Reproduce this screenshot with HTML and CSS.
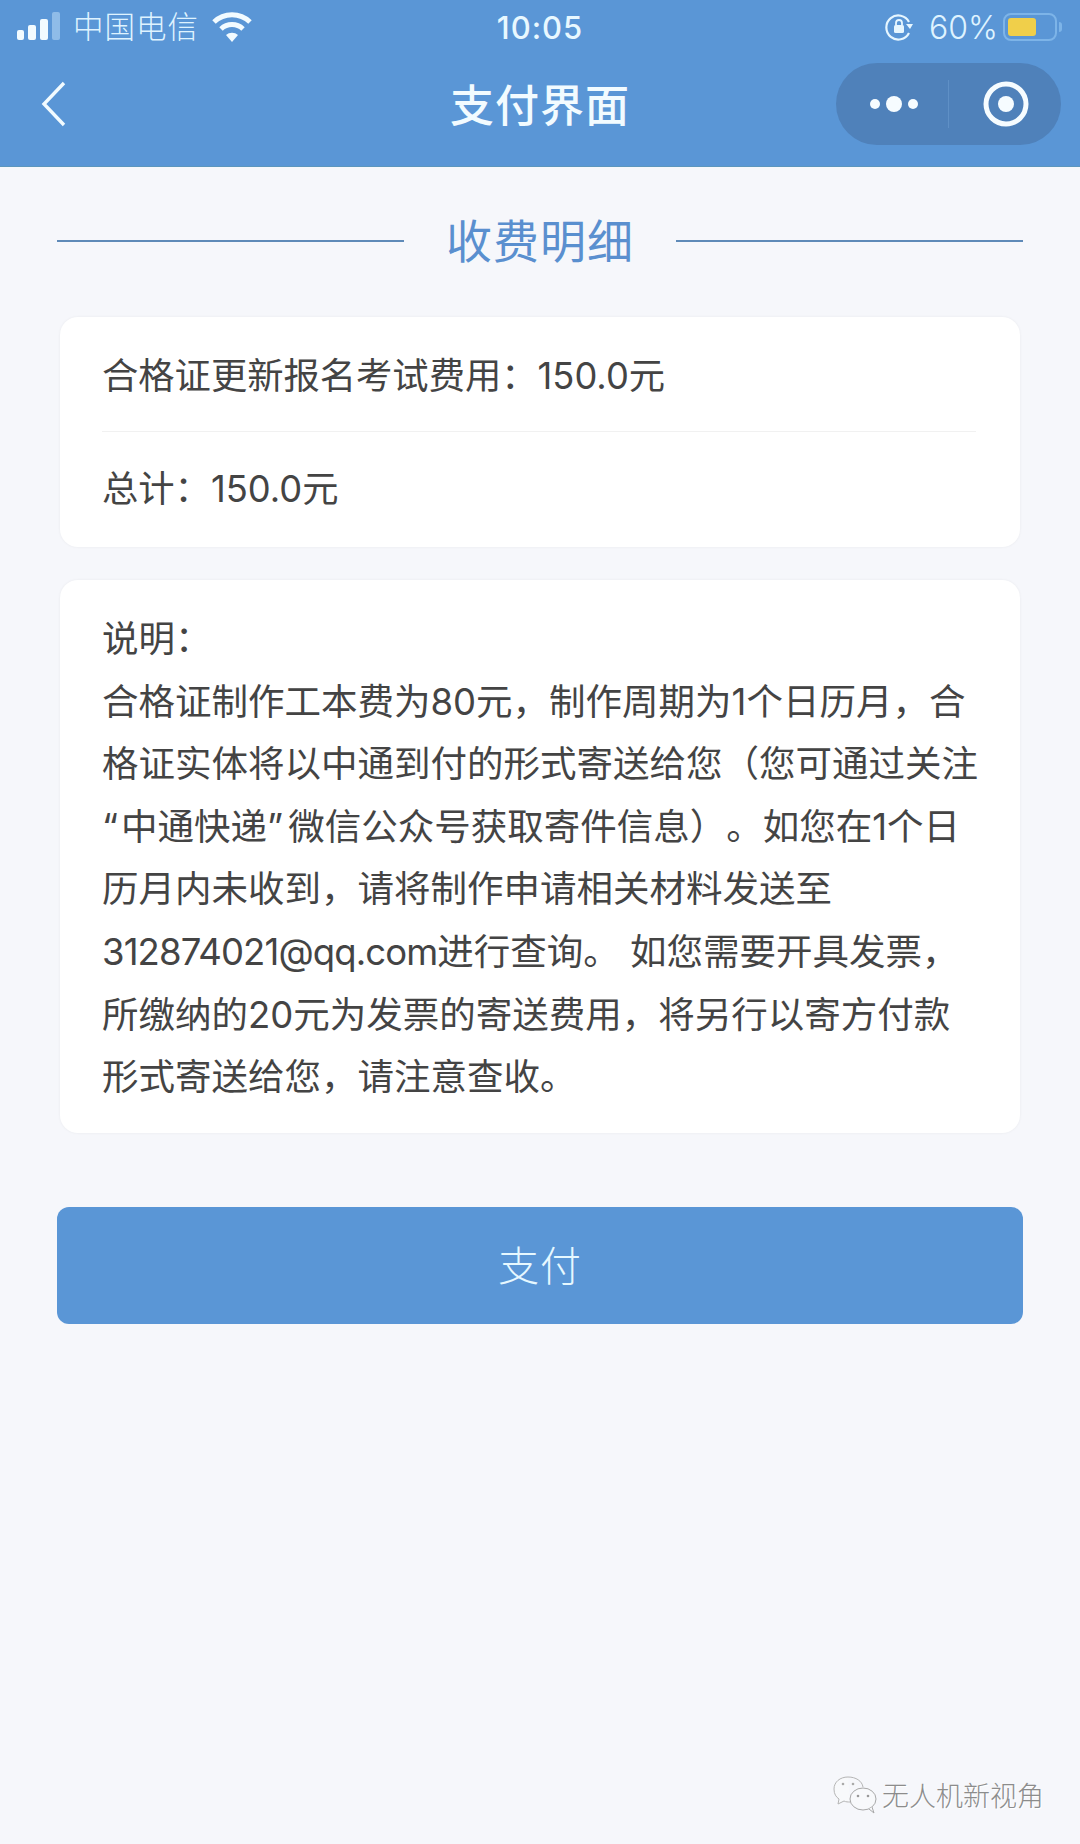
FILE: index.html
```html
<!DOCTYPE html>
<html lang="zh-CN">
<head>
<meta charset="UTF-8" />
<meta name="viewport" content="width=device-width, initial-scale=1" />
<title>支付界面</title>
<link rel="stylesheet" href="styles.css">
</head>
<body>
<div class="page">
  <header class="top">
    <div class="status">
      <div class="status-left">
        <svg class="signal" width="46" height="28" viewBox="0 0 46 28">
          <rect x="0" y="18" width="7" height="10" rx="2" fill="#f2fbff"/>
          <rect x="11" y="13" width="8" height="15" rx="2" fill="#f2fbff"/>
          <rect x="23" y="7" width="8" height="21" rx="2" fill="#f2fbff"/>
          <rect x="35" y="0" width="8" height="28" rx="2" fill="#8fbce8"/>
        </svg>
        <span class="carrier">中国电信</span>
        <svg class="wifi" width="40" height="30" viewBox="0 0 40 30">
          <path d="M2 10 A26 26 0 0 1 38 10" fill="none" stroke="#f2fbff" stroke-width="5"/>
          <path d="M9 17 A16 16 0 0 1 31 17" fill="none" stroke="#f2fbff" stroke-width="5"/>
          <path d="M14 23 A9 9 0 0 1 26 23 L20 30 Z" fill="#f2fbff"/>
        </svg>
      </div>
      <div class="clock">10:05</div>
      <div class="status-right">
        <svg class="lock" width="28" height="28" viewBox="0 0 28 28">
          <path d="M24 9 A12 12 0 1 0 24 20" fill="none" stroke="#e6f6ff" stroke-width="2.2"/>
          <path d="M21 11 L28 11 L25 16 Z" fill="#e6f6ff"/>
          <rect x="9" y="12" width="10" height="8" rx="1.5" fill="#e6f6ff"/>
          <path d="M11 12 V10 A3 3 0 0 1 17 10 V12" fill="none" stroke="#e6f6ff" stroke-width="1.8"/>
        </svg>
        <span class="percent">60%</span>
        <div class="battery"><div class="battery-fill"></div></div>
        <div class="battery-nub"></div>
      </div>
    </div>
    <div class="nav">
      <svg class="back" width="26" height="46" viewBox="0 0 26 46">
        <path d="M23 2 L3 23 L23 44" fill="none" stroke="#f2fbff" stroke-width="3.4"/>
      </svg>
      <h1 class="nav-title">支付界面</h1>
      <div class="capsule">
        <svg class="dots" width="50" height="20" viewBox="0 0 50 20">
          <circle cx="6" cy="10" r="5" fill="#f6fcff"/>
          <circle cx="25" cy="10" r="8" fill="#f6fcff"/>
          <circle cx="44" cy="10" r="5" fill="#f6fcff"/>
        </svg>
        <div class="capsule-line"></div>
        <svg class="target" width="46" height="46" viewBox="0 0 46 46">
          <circle cx="23" cy="23" r="20" fill="none" stroke="#f6fcff" stroke-width="5"/>
          <circle cx="23" cy="23" r="8" fill="#f6fcff"/>
        </svg>
      </div>
    </div>
  </header>

  <main class="content">
    <div class="heading">
      <span class="heading-line"></span>
      <h2>收费明细</h2>
      <span class="heading-line"></span>
    </div>

    <section class="card fee">
      <div class="fee-row fee-first">合格证更新报名考试费用：150.0元</div>
      <div class="fee-row">总计：150.0元</div>
    </section>

    <section class="card note">
      说明：<br>
      合格证制作工本费为80元，制作周期为1个日历月，合<br>
      格证实体将以中通到付的形式寄送给您（您可通过关注<br>
      <span class="quote-open">“</span>中通快递<span class="quote-close">”</span>微信公众号获取寄件信息）。如您在1个日<br>
      历月内未收到，请将制作申请相关材料发送至<br>
      <span class="mail">312874021@qq.com</span>进行查询。 如您需要开具发票，<br>
      所缴纳的20元为发票的寄送费用，将另行以寄方付款<br>
      形式寄送给您，请注意查收。
    </section>

    <button class="pay" type="button">支付</button>
  </main>

  <div class="mark">
    <svg width="44" height="38" viewBox="0 0 44 38">
      <path d="M15 1 C7 1 1 6 1 13 C1 18 3 21 6 23 L5 28 L11 25 C13 26 15 26 17 26" fill="#f8f9fb" stroke="#b5b5b5" stroke-width="1"/>
      <path d="M15 1 C23 1 29 5 30 11" fill="none" stroke="#b5b5b5" stroke-width="1"/>
      <ellipse cx="30" cy="23" rx="13" ry="11" fill="#f8f9fb" stroke="#a8a8a8" stroke-width="1"/>
      <path d="M36 33 L41 37 L39 31" fill="#f8f9fb" stroke="#a8a8a8" stroke-width="1"/>
      <circle cx="10" cy="8" r="1.3" fill="#aaa"/>
      <circle cx="20" cy="8" r="1.3" fill="#aaa"/>
      <circle cx="25" cy="20" r="1.3" fill="#999"/>
      <circle cx="35" cy="20" r="1.3" fill="#999"/>
    </svg>
    <span class="mark-text">无人机新视角</span>
  </div>
</div>
</body>
</html>
```

FILE: styles.css
```css
html, body { margin:0; padding:0; }
body { background:#f6f7fb; font-family:Inter, "Noto Sans CJK SC", sans-serif; text-spacing-trim:space-all; }
.page { position:relative; width:1080px; height:1844px; overflow:hidden; }

.top { height:166px; background:#5a96d6; border-bottom:1px solid #5c96bd; color:#f2fbff; }
.status { height:54px; display:grid; grid-template-columns:1fr auto 1fr; align-items:center; }
.status-left { display:flex; align-items:center; padding-left:17px; }
.signal { margin-top:-2px; }
.carrier { margin:-4px 0 0 10px; font-size:30.5px; font-weight:300; letter-spacing:1px; color:#dff3ff; }
.wifi { margin-left:13px; margin-top:0; }
.clock { font-size:31px; font-weight:500; letter-spacing:1px; color:#e8f8ff; }
.status-right { display:flex; align-items:center; justify-content:flex-end; padding-right:18px; }
.lock { margin-right:16px; }
.percent { font-size:32px; font-weight:300; color:#dff3ff; }
.battery { width:54px; height:28px; margin-left:5px; padding:3px; box-sizing:border-box; border:2px solid #7db4e8; border-radius:8px; }
.battery-fill { width:28px; height:100%; background:#f0cf4a; border-radius:3px; }
.battery-nub { width:3px; height:10px; margin-left:2px; background:#7db4e8; border-radius:0 3px 3px 0; }

.nav { height:112px; display:grid; grid-template-columns:1fr auto 1fr; align-items:center; }
.back { margin-left:41px; margin-top:-12px; }
.nav-title { margin:0; font-size:44px; font-weight:500; line-height:100px; letter-spacing:1px; color:#f2fbff; transform:translateY(-4px); }
.capsule { justify-self:end; width:225px; height:82px; margin:-13px 19px 0 0; display:flex; align-items:center; background:#4f81ba; border-radius:41px; }
.dots { margin-left:33px; }
.capsule-line { width:1px; height:48px; margin-left:29px; background:#5f90c6; }
.target { margin-left:34px; }

.content { padding:0 57px; }
.heading { height:150px; padding-bottom:2px; box-sizing:border-box; display:flex; align-items:center; justify-content:space-between; }
.heading-line { width:347px; height:2px; background:#5f8ab8; }
.heading h2 { margin:0 0 7px; font-size:46px; font-weight:400; letter-spacing:1px; color:#5a8fcf; }

.card { margin:0 3px; background:#fff; border-radius:18px; box-shadow:0 0 3px rgba(0,0,0,0.06); font-weight:400; color:#444; }
.fee { height:230px; padding:0 44px 0 42px; box-sizing:border-box; font-size:36.3px; }
.fee-row { height:115px; line-height:115px; white-space:nowrap; }
.fee-first { line-height:118px; border-bottom:1px solid #f1f1f1; box-sizing:border-box; }
.note { margin-top:33px; height:553px; padding:28px 40px 0 42px; box-sizing:border-box; font-size:36.5px; line-height:62.6px; white-space:nowrap; }
.quote-open { letter-spacing:3px; }
.quote-close { letter-spacing:5px; }
.mail { letter-spacing:-0.9px; }

.pay { display:block; width:100%; height:117px; margin-top:74px; padding:0 0 6px; border:none; border-radius:12px; background:#5a96d6; font-family:inherit; font-size:41px; font-weight:300; letter-spacing:1px; color:#e6f8ff; }

.mark { position:absolute; left:833px; top:1775px; display:flex; align-items:center; }
.mark-text { margin-left:5px; font-size:27px; font-weight:300; color:#8c8c8c; text-shadow:1px 1px 0 #fff; white-space:nowrap; }
```
